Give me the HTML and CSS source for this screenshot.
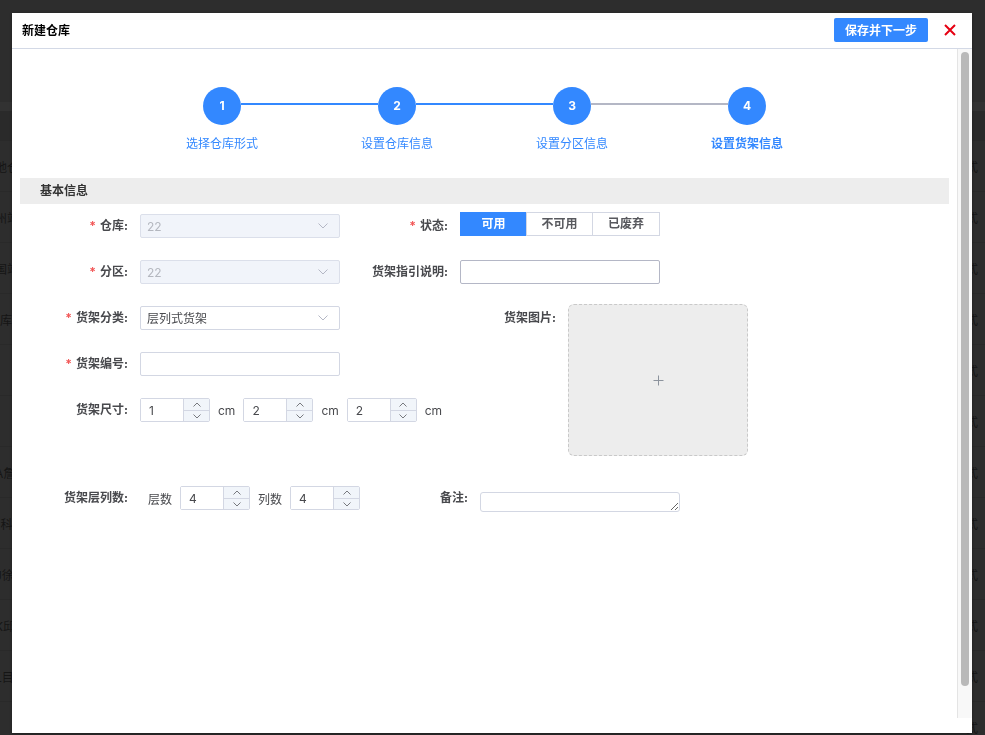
FILE: index.html
```html
<!DOCTYPE html>
<html lang="zh-CN">
<head>
  <meta charset="utf-8">
  <title>新建仓库</title>
  <link rel="stylesheet" href="styles.css">
</head>
<body>
  <table class="page-list">
    <thead>
      <tr><th></th><th></th></tr>
    </thead>
    <tbody>
      <tr><td>地仓</td><td>式</td></tr>
      <tr><td>州站</td><td>式</td></tr>
      <tr><td>国站</td><td>式</td></tr>
      <tr><td>1库</td><td>式</td></tr>
      <tr><td></td><td>式</td></tr>
      <tr><td></td><td>式</td></tr>
      <tr><td>A詹</td><td>式</td></tr>
      <tr><td>-科</td><td>式</td></tr>
      <tr><td>J徐</td><td>式</td></tr>
      <tr><td>K邱</td><td>式</td></tr>
      <tr><td>L目</td><td>式</td></tr>
      <tr><td></td><td>式</td></tr>
    </tbody>
  </table>

  <div class="overlay">
    <div class="dialog">
      <div class="dialog-header">
        <h1>新建仓库</h1>
        <button type="submit" form="shelf-form" class="btn-save">保存并下一步</button>
        <button type="button" class="btn-close" aria-label="关闭">
          <svg width="12" height="12" viewBox="0 0 12 12"><path d="M1 1L11 11M11 1L1 11"/></svg>
        </button>
      </div>

      <div class="dialog-body">
        <div class="content">
          <ol class="steps">
            <li class="step done">
              <span class="line hidden"></span><span class="circle">1</span><span class="line"></span>
              <span class="step-title">选择仓库形式</span>
            </li>
            <li class="step done">
              <span class="line"></span><span class="circle">2</span><span class="line"></span>
              <span class="step-title">设置仓库信息</span>
            </li>
            <li class="step done">
              <span class="line"></span><span class="circle">3</span><span class="line wait"></span>
              <span class="step-title">设置分区信息</span>
            </li>
            <li class="step current">
              <span class="line wait"></span><span class="circle">4</span><span class="line hidden"></span>
              <span class="step-title">设置货架信息</span>
            </li>
          </ol>

          <h2>基本信息</h2>

          <form id="shelf-form">
            <div class="form-row">
              <div class="form-item">
                <label class="label required" for="warehouse">仓库:</label>
                <div class="select">
                  <select id="warehouse" disabled><option>22</option></select>
                  <svg width="10" height="6" viewBox="0 0 10 6"><path d="M.5 .5L5 5L9.500 .5"/></svg>
                </div>
              </div>
              <div class="form-item" role="radiogroup" aria-labelledby="status-label">
                <span class="label required" id="status-label">状态:</span>
                <div class="radio-group">
                  <label><input type="radio" name="status" checked><span>可用</span></label>
                  <label><input type="radio" name="status"><span>不可用</span></label>
                  <label><input type="radio" name="status"><span>已废弃</span></label>
                </div>
              </div>
            </div>

            <div class="form-row">
              <div class="form-item">
                <label class="label required" for="zone">分区:</label>
                <div class="select">
                  <select id="zone" disabled><option>22</option></select>
                  <svg width="10" height="6" viewBox="0 0 10 6"><path d="M.5 .5L5 5L9.500 .5"/></svg>
                </div>
              </div>
              <div class="form-item">
                <label class="label" for="guide">货架指引说明:</label>
                <input type="text" class="input hover" id="guide">
              </div>
            </div>

            <div class="form-row">
              <div class="form-col">
                <div class="form-item">
                  <label class="label required" for="category">货架分类:</label>
                  <div class="select">
                    <select id="category"><option>层列式货架</option></select>
                    <svg width="10" height="6" viewBox="0 0 10 6"><path d="M.5 .5L5 5L9.500 .5"/></svg>
                  </div>
                </div>
                <div class="form-item">
                  <label class="label required" for="code">货架编号:</label>
                  <input type="text" class="input" id="code">
                </div>
                <div class="form-item">
                  <label class="label" for="length">货架尺寸:</label>
                  <div class="number">
                    <input type="text" id="length" value="1">
                    <button type="button" aria-label="增加"><svg width="8" height="5" viewBox="0 0 8 5"><path d="M.5 4.500L4 1L7.500 4.500"/></svg></button>
                    <button type="button" aria-label="减少"><svg width="8" height="5" viewBox="0 0 8 5"><path d="M.5 .5L4 4L7.500 .5"/></svg></button>
                  </div>
                  <span class="unit">cm</span>
                  <div class="number">
                    <input type="text" aria-label="宽" value="2">
                    <button type="button" aria-label="增加"><svg width="8" height="5" viewBox="0 0 8 5"><path d="M.5 4.500L4 1L7.500 4.500"/></svg></button>
                    <button type="button" aria-label="减少"><svg width="8" height="5" viewBox="0 0 8 5"><path d="M.5 .5L4 4L7.500 .5"/></svg></button>
                  </div>
                  <span class="unit">cm</span>
                  <div class="number">
                    <input type="text" aria-label="高" value="2">
                    <button type="button" aria-label="增加"><svg width="8" height="5" viewBox="0 0 8 5"><path d="M.5 4.500L4 1L7.500 4.500"/></svg></button>
                    <button type="button" aria-label="减少"><svg width="8" height="5" viewBox="0 0 8 5"><path d="M.5 .5L4 4L7.500 .5"/></svg></button>
                  </div>
                  <span class="unit">cm</span>
                </div>
              </div>
              <div class="form-item picture">
                <span class="label" id="picture-label">货架图片:</span>
                <button type="button" class="upload" aria-labelledby="picture-label">
                  <svg width="11" height="11" viewBox="0 0 11 11"><path d="M5.500 .5V10.500M.5 5.500H10.500"/></svg>
                </button>
              </div>
            </div>

            <div class="form-row">
              <div class="form-item">
                <span class="label">货架层列数:</span>
                <label class="unit" for="layers">层数</label>
                <div class="number">
                  <input type="text" id="layers" value="4">
                  <button type="button" aria-label="增加"><svg width="8" height="5" viewBox="0 0 8 5"><path d="M.5 4.500L4 1L7.500 4.500"/></svg></button>
                  <button type="button" aria-label="减少"><svg width="8" height="5" viewBox="0 0 8 5"><path d="M.5 .5L4 4L7.500 .5"/></svg></button>
                </div>
                <label class="unit" for="columns">列数</label>
                <div class="number">
                  <input type="text" id="columns" value="4">
                  <button type="button" aria-label="增加"><svg width="8" height="5" viewBox="0 0 8 5"><path d="M.5 4.500L4 1L7.500 4.500"/></svg></button>
                  <button type="button" aria-label="减少"><svg width="8" height="5" viewBox="0 0 8 5"><path d="M.5 .5L4 4L7.500 .5"/></svg></button>
                </div>
              </div>
              <div class="form-item">
                <label class="label" for="remark">备注:</label>
                <textarea id="remark" rows="1"></textarea>
              </div>
            </div>
          </form>
        </div>
        <div class="scrollbar"><div class="thumb"></div></div>
      </div>
    </div>
  </div>
</body>
</html>
```

FILE: styles.css
```css
* {
  box-sizing: border-box;
}

body {
  margin: 0;
  height: 100vh;
  overflow: hidden;
  background: #2d2d2d;
  color: #48494d;
  font-family: Inter, "Noto Sans CJK SC", sans-serif;
  font-size: 12px;
}

button, input, select, textarea {
  margin: 0;
  font: inherit;
  color: inherit;
}

button {
  padding: 0;
  border: none;
  cursor: pointer;
}

svg {
  fill: none;
}

/* list page under the dialog */
.page-list {
  width: calc(100% + 12px);
  margin: 102px 0 0 -5px;
  border-collapse: collapse;
  color: #151515;
}

.page-list th {
  height: 34px;
  padding: 0;
  border-top: 9px solid #323232;
  background: #2a2a2a;
}

.page-list td {
  height: 51px;
  padding: 0;
  border-top: 1px solid #292929;
}

.page-list td:last-child {
  text-align: right;
  padding-right: 14px;
}

.overlay {
  position: fixed;
  inset: 0;
  display: flex;
  padding: 13px 13px 2px 12px;
}

.dialog {
  flex: 1;
  display: flex;
  flex-direction: column;
  background: #fff;
  box-shadow: 0 1px 3px rgba(0, 0, 0, 0.3);
}

.dialog-header {
  display: flex;
  align-items: center;
  height: 36px;
  padding: 0 16px 2px 10px;
  border-bottom: 1px solid #d3d9e6;
}

.dialog-header h1 {
  flex: 1;
  margin: 0;
  font-size: 12px;
  color: #000;
}

.btn-save {
  width: 94px;
  height: 24px;
  margin-right: 16px;
  border-radius: 2px;
  background: #3388ff;
  color: #fff;
  font-weight: bold;
}

.btn-close {
  display: flex;
  background: none;
}

.btn-close svg {
  stroke: #e60012;
  stroke-width: 2;
}

.dialog-body {
  flex: 1;
  display: flex;
}

.content {
  flex: 1;
  padding: 38px 8px 0;
}

/* steps */
.steps {
  display: flex;
  width: 700px;
  margin: 0 auto;
  padding: 0;
  list-style: none;
}

.step {
  flex: 1;
  display: grid;
  grid-template-columns: 1fr 38px 1fr;
  row-gap: 9px;
  color: #3388ff;
}

.circle {
  height: 38px;
  border-radius: 50%;
  background: #3388ff;
  color: #fff;
  font-weight: bold;
  line-height: 38px;
  text-align: center;
}

.line {
  height: 2px;
  margin-top: 16px;
  background: #3388ff;
}

.line.wait {
  background: #b4b7c5;
}

.line.hidden {
  visibility: hidden;
}

.step-title {
  grid-column: 1 / -1;
  line-height: 20px;
  text-align: center;
}

.current .step-title {
  font-weight: bold;
}

.content h2 {
  margin: 24px 0 0;
  padding-left: 20px;
  background: #ededed;
  color: #333;
  font-size: 12px;
  line-height: 26px;
}

/* form */
form {
  padding-top: 8px;
}

.form-row {
  display: flex;
}

.form-col {
  width: 428px;
}

.form-item {
  display: flex;
  align-items: center;
  min-height: 28px;
  margin-bottom: 18px;
}

.label {
  flex: none;
  width: 120px;
  padding-right: 12px;
  font-weight: bold;
  line-height: 28px;
  text-align: right;
}

.required::before {
  content: "*";
  margin-right: 4px;
  color: #f25555;
}

.input,
.select select {
  display: block;
  width: 200px;
  height: 24px;
  padding: 0 6px;
  border: 1px solid #d3d7e3;
  border-radius: 2px;
  background: #fff;
  outline: none;
}

.input.hover {
  border-color: #b4b7c6;
}

.select {
  position: relative;
}

.select select {
  appearance: none;
}

.select select:disabled {
  border-color: #dbdfea;
  background: #f1f4fa;
  color: #b4b7bf;
  opacity: 1;
}

.select svg {
  position: absolute;
  top: 9px;
  right: 12px;
  stroke: #b4b7c5;
  pointer-events: none;
}

.radio-group {
  align-self: flex-start;
  display: flex;
}

.radio-group input {
  position: absolute;
  opacity: 0;
}

.radio-group span {
  display: block;
  width: 67px;
  height: 24px;
  border: 1px solid #d3d7e3;
  color: #58595e;
  font-weight: bold;
  line-height: 22px;
  text-align: center;
}

.radio-group label + label {
  margin-left: -1px;
}

.radio-group label:last-child span {
  width: 68px;
}

.radio-group input:checked + span {
  border-color: #3388ff;
  background: #3388ff;
  color: #fff;
}

.number {
  flex: none;
  display: grid;
  grid-template: 1fr 1fr / 43px 25px;
  width: 70px;
  height: 24px;
  border: 1px solid #d3d7e3;
  border-radius: 2px;
}

.number input {
  grid-row: 1 / 3;
  min-width: 0;
  padding: 0 0 0 8px;
  border: none;
  border-right: 1px solid #d3d7e3;
  outline: none;
}

.number button {
  display: flex;
  align-items: center;
  justify-content: center;
  background: #f1f5fa;
}

.number button + button {
  border-top: 1px solid #d3d7e3;
}

.number svg {
  stroke: #77797e;
}

.unit {
  padding: 0 8px;
}

.picture {
  align-items: flex-start;
  padding-bottom: 10px;
}

.upload {
  display: flex;
  align-items: center;
  justify-content: center;
  width: 180px;
  height: 152px;
  border: 1px dashed #c9c9c9;
  border-radius: 6px;
  background: #ededed;
}

.upload svg {
  stroke: #8c939d;
}

textarea {
  align-self: flex-end;
  width: 200px;
  height: 20px;
  padding: 0 6px;
  border: 1px solid #d3d7e3;
  border-radius: 3px;
  outline: none;
}

/* scrollbar */
.scrollbar {
  width: 15px;
  margin-bottom: 15px;
  padding: 3px;
  border-left: 1px solid #e4e4e4;
  background: #f8f8f8;
}

.thumb {
  width: 8px;
  height: calc(100% - 29px);
  border-radius: 4px;
  background: #b9b9b9;
}
```
